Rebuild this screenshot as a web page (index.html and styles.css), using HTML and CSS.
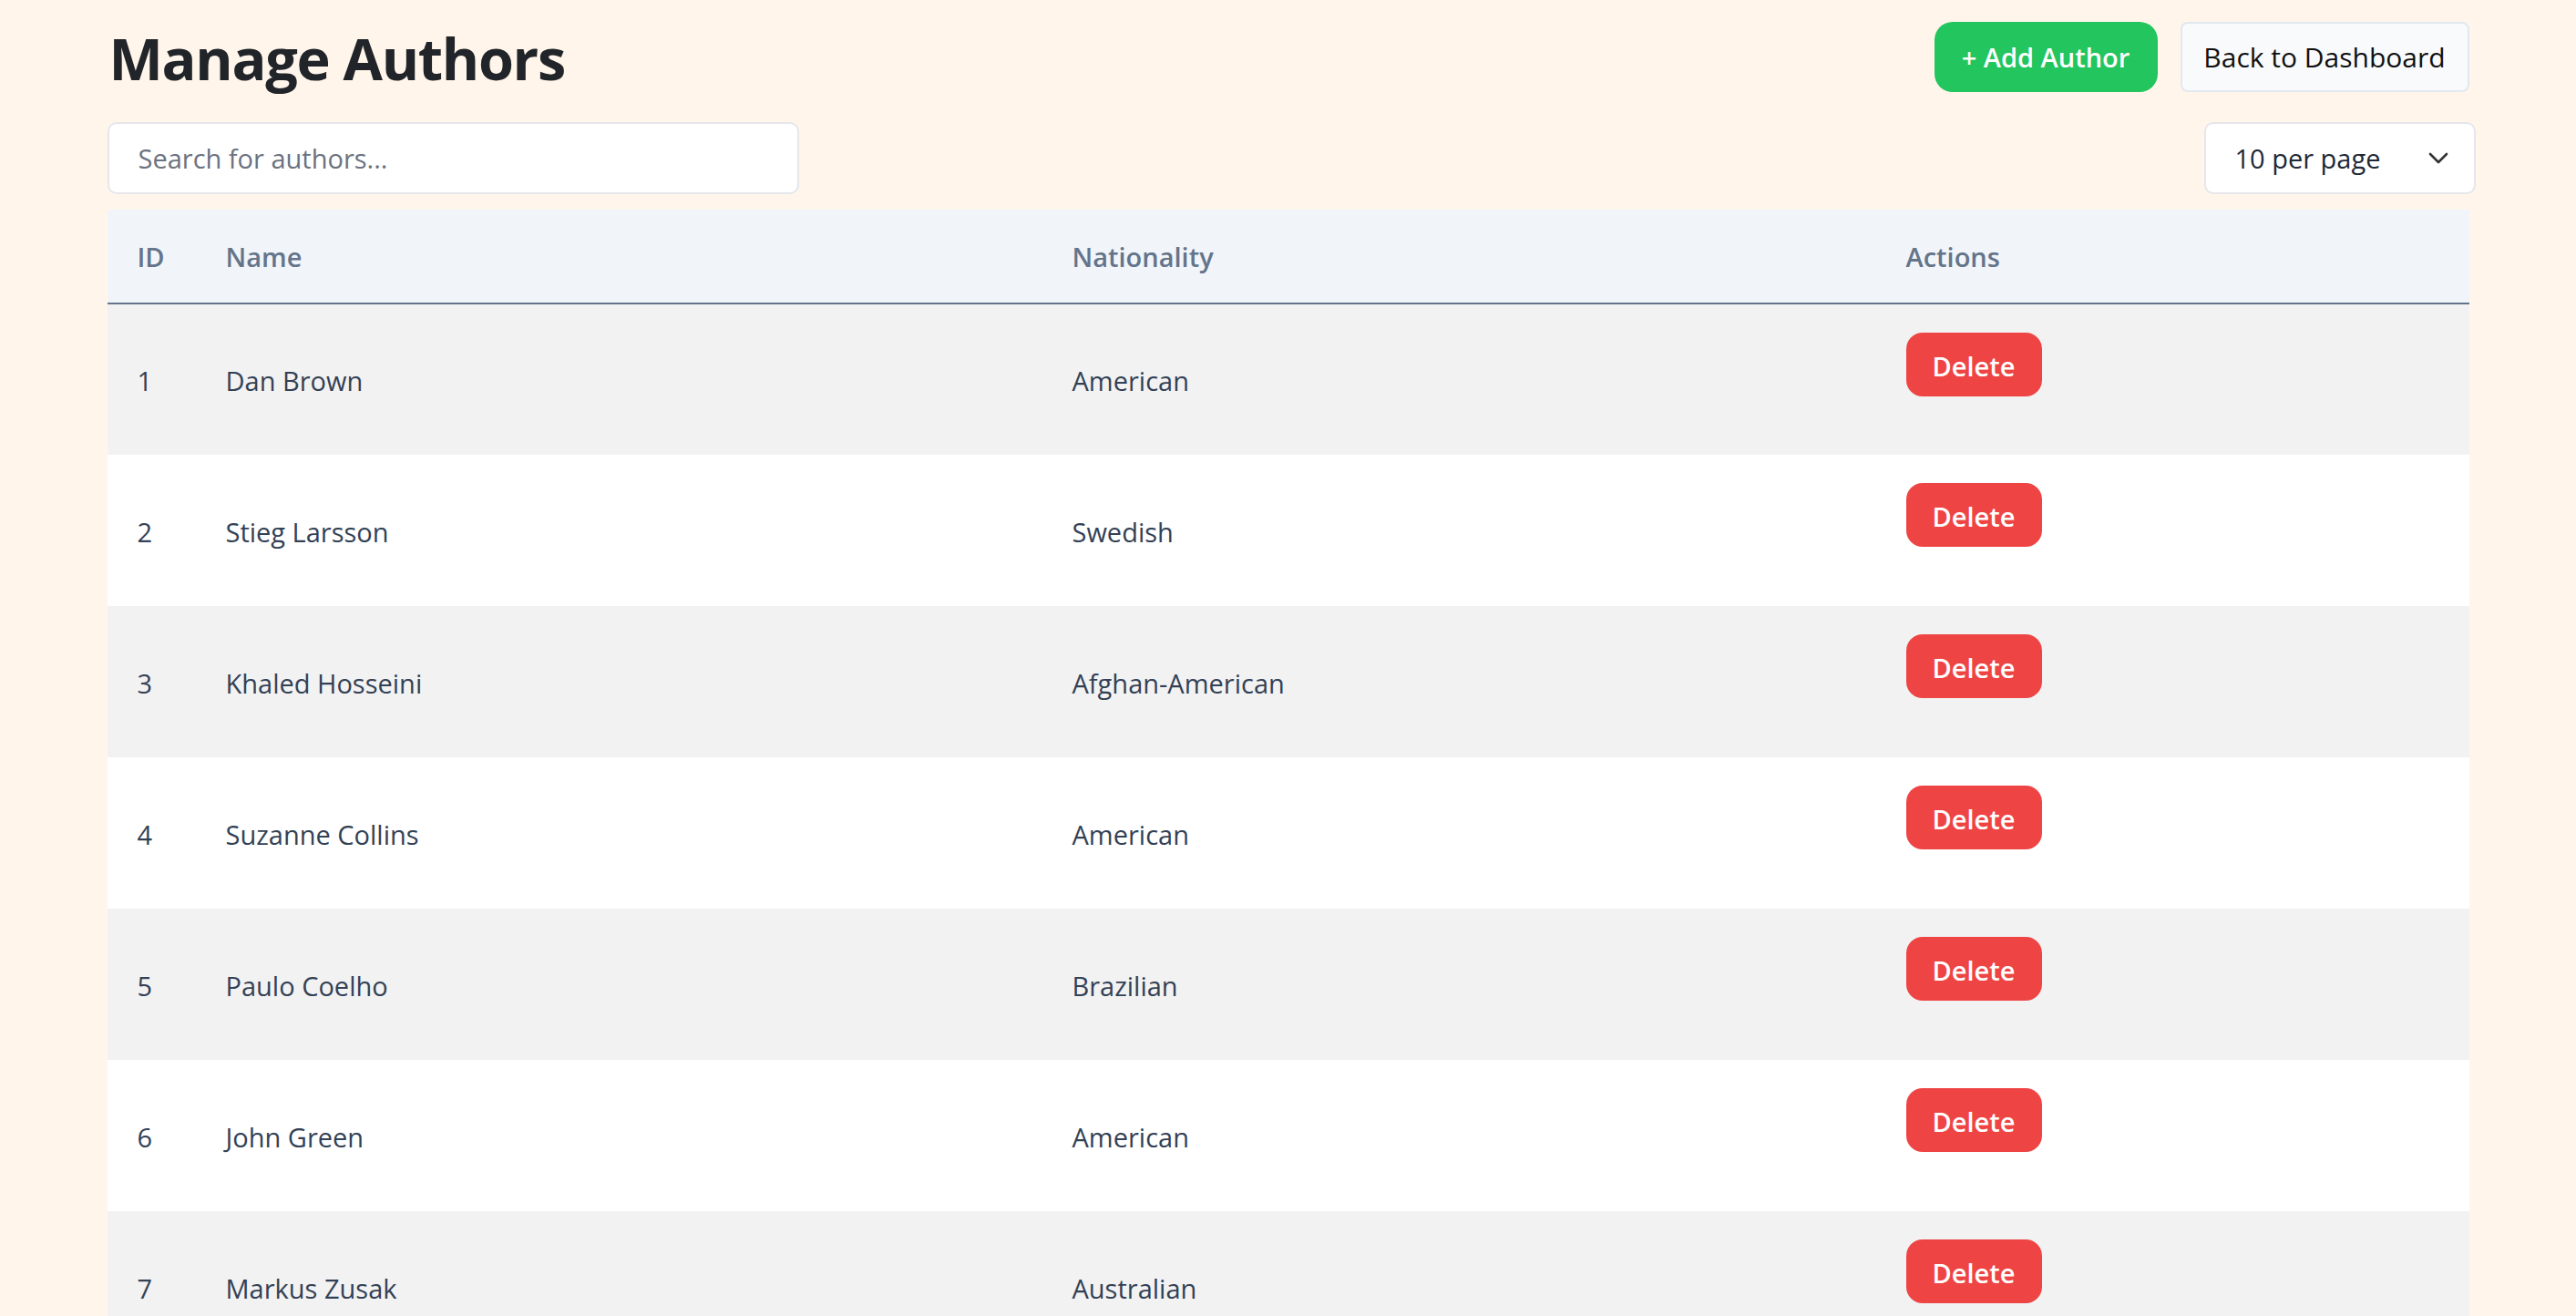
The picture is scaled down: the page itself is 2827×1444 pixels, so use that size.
FILE: index.html
```html
<!DOCTYPE html>
<html lang="en">
<head>
<meta charset="utf-8">
<title>Manage Authors</title>
<link rel="stylesheet" href="styles.css">
</head>
<body>
<div class="page">
  <header class="topbar">
    <h1 class="title">Manage Authors</h1>
    <div class="top-actions">
      <button class="btn btn-add">+ Add Author</button>
      <button class="btn btn-back">Back to Dashboard</button>
    </div>
  </header>
  <div class="toolbar">
    <div class="search">Search for authors...</div>
    <div class="select">
      <span>10 per page</span>
      <svg class="chev" width="22" height="13" viewBox="0 0 22 13"><path d="M2 2 L11 11 L20 2" fill="none" stroke="#333" stroke-width="2.6" stroke-linecap="round" stroke-linejoin="round"/></svg>
    </div>
  </div>
  <table class="authors">
    <colgroup>
      <col class="c-id"><col class="c-name"><col class="c-nat"><col class="c-act">
    </colgroup>
    <thead>
      <tr><th>ID</th><th>Name</th><th>Nationality</th><th>Actions</th></tr>
    </thead>
    <tbody>
      <tr><td>1</td><td>Dan Brown</td><td>American</td><td class="act"><button class="btn-del">Delete</button></td></tr>
      <tr><td>2</td><td>Stieg Larsson</td><td>Swedish</td><td class="act"><button class="btn-del">Delete</button></td></tr>
      <tr><td>3</td><td>Khaled Hosseini</td><td>Afghan-American</td><td class="act"><button class="btn-del">Delete</button></td></tr>
      <tr><td>4</td><td>Suzanne Collins</td><td>American</td><td class="act"><button class="btn-del">Delete</button></td></tr>
      <tr><td>5</td><td>Paulo Coelho</td><td>Brazilian</td><td class="act"><button class="btn-del">Delete</button></td></tr>
      <tr><td>6</td><td>John Green</td><td>American</td><td class="act"><button class="btn-del">Delete</button></td></tr>
      <tr><td>7</td><td>Markus Zusak</td><td>Australian</td><td class="act"><button class="btn-del">Delete</button></td></tr>
    </tbody>
  </table>
</div>
</body>
</html>
```
FILE: styles.css
```css
* { box-sizing: border-box; }
html, body { margin: 0; padding: 0; }
body {
  background: #fff5eb;
  font-family: "Open Sans", "Noto Sans", sans-serif;
  color: #334155;
}
.page {
  max-width: 2592px;
  margin: 0 auto;
  padding-top: 24px;
}
.topbar {
  display: flex;
  justify-content: space-between;
  align-items: flex-start;
  height: 77px;
}
.title {
  margin: 0;
  padding-left: 2px;
  font-size: 63px;
  line-height: 79px;
  font-weight: 700;
  color: #212529;
  letter-spacing: -1.3px;
}
.top-actions {
  display: flex;
  gap: 25px;
}
.btn {
  font-family: inherit;
  height: 77px;
  font-size: 29px;
  cursor: pointer;
  padding: 0;
}
.btn-add {
  width: 245px;
  background: #22c55e;
  color: #fff;
  font-weight: 600;
  border: none;
  border-radius: 20px;
}
.btn-back {
  width: 317px;
  background: #f8fafc;
  color: #111;
  font-size: 30px;
  font-weight: 400;
  border: 2px solid #e2e8f0;
  border-radius: 8px;
}
.toolbar {
  display: flex;
  justify-content: space-between;
  margin-top: 33px;
}
.search {
  width: 759px;
  height: 79px;
  background: #fff;
  border: 2px solid #e5e7eb;
  border-radius: 10px;
  padding-left: 32px;
  display: flex;
  align-items: center;
  font-size: 29px;
  color: #6b7280;
}
.select {
  width: 298px;
  height: 79px;
  margin-right: -7px;
  background: #fff;
  border: 2px solid #e5e7eb;
  border-radius: 10px;
  padding: 0 28px 0 32px;
  display: flex;
  align-items: center;
  justify-content: space-between;
  font-size: 29px;
  color: #1f2937;
}
.chev { display: block; }
.authors {
  margin-top: 17px;
  width: 100%;
  border-collapse: collapse;
  table-layout: fixed;
  font-size: 29px;
}
.c-id { width: 97px; }
.c-name { width: 929px; }
.c-nat { width: 915px; }
.c-act { width: 651px; }
.authors th {
  background: #f1f5f9;
  color: #64748b;
  font-weight: 600;
  text-align: left;
  height: 103px;
  padding: 0 0 0 33px;
  border-bottom: 2px solid #64748b;
}
.authors td {
  height: 166px;
  padding: 2px 0 0 33px;
  vertical-align: middle;
  color: #334155;
}
.authors tbody tr:nth-child(odd) { background: #f2f2f2; }
.authors tbody tr:nth-child(even) { background: #fff; }
.authors td.act {
  vertical-align: top;
  padding-top: 31px;
}
.btn-del {
  font-family: inherit;
  width: 149px;
  height: 70px;
  padding: 2px 0 0;
  border: none;
  border-radius: 18px;
  background: #ef4444;
  color: #fff;
  font-size: 29px;
  font-weight: 600;
  cursor: pointer;
}
```
